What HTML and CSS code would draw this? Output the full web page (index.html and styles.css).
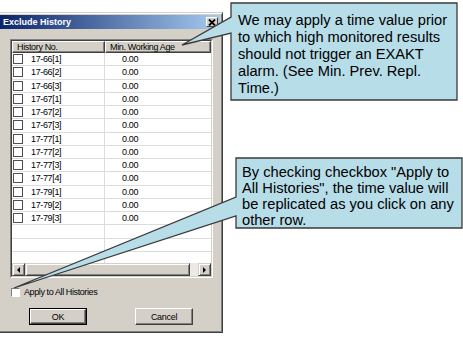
FILE: index.html
```html
<!DOCTYPE html>
<html>
<head>
<meta charset="utf-8">
<link rel="stylesheet" href="styles.css">
</head>
<body>
<div class="dialog">
  <div class="titlebar">
    <span class="title">Exclude History</span>
    <span class="close"><svg width="8" height="7" viewBox="0 0 8 7"><path d="M1 0.5 L7 6.5 M7 0.5 L1 6.5" stroke="#000" stroke-width="1.8"/></svg></span>
  </div>
  <div class="listbox">
    <div class="listinner">
      <div class="header">
        <div class="hcell h1">History No.</div>
        <div class="hcell h2">Min. Working Age</div>
      </div>
      <div class="rows">
        <div class="row"><div class="col1"><span class="cb"></span>17-66[1]</div><div class="col2">0.00</div></div>
        <div class="row"><div class="col1"><span class="cb"></span>17-66[2]</div><div class="col2">0.00</div></div>
        <div class="row"><div class="col1"><span class="cb"></span>17-66[3]</div><div class="col2">0.00</div></div>
        <div class="row"><div class="col1"><span class="cb"></span>17-67[1]</div><div class="col2">0.00</div></div>
        <div class="row"><div class="col1"><span class="cb"></span>17-67[2]</div><div class="col2">0.00</div></div>
        <div class="row"><div class="col1"><span class="cb"></span>17-67[3]</div><div class="col2">0.00</div></div>
        <div class="row"><div class="col1"><span class="cb"></span>17-77[1]</div><div class="col2">0.00</div></div>
        <div class="row"><div class="col1"><span class="cb"></span>17-77[2]</div><div class="col2">0.00</div></div>
        <div class="row"><div class="col1"><span class="cb"></span>17-77[3]</div><div class="col2">0.00</div></div>
        <div class="row"><div class="col1"><span class="cb"></span>17-77[4]</div><div class="col2">0.00</div></div>
        <div class="row"><div class="col1"><span class="cb"></span>17-79[1]</div><div class="col2">0.00</div></div>
        <div class="row"><div class="col1"><span class="cb"></span>17-79[2]</div><div class="col2">0.00</div></div>
        <div class="row"><div class="col1"><span class="cb"></span>17-79[3]</div><div class="col2">0.00</div></div>
        <div class="row"><div class="col1"></div><div class="col2"></div></div>
        <div class="row"><div class="col1"></div><div class="col2"></div></div>
        <div class="row"><div class="col1"></div><div class="col2"></div></div>
      </div>
      <div class="hscroll">
        <div class="sbtn"><span class="arrow left"></span></div>
        <div class="thumb"></div>
        <div class="track"></div>
        <div class="sbtn"><span class="arrow right"></span></div>
      </div>
    </div>
  </div>
  <div class="apply"><span class="applycb"></span><span>Apply to All Histories</span></div>
  <div class="buttons">
    <div class="btn default"><div class="btnface">OK</div></div>
    <div class="btn"><div class="btnface">Cancel</div></div>
  </div>
</div>

<svg class="overlay" width="463" height="337" viewBox="0 0 463 337">
  <path d="M231 3 H457 V100 H231 V33 L182 45 L231 17 Z" fill="#B7DDE8" stroke="#3a3a3a" stroke-width="1.3" stroke-linejoin="miter"/>
  <path d="M236 158 H462 V228 H236 V216 L14 288 L236 197 Z" fill="#B7DDE8" stroke="#3a3a3a" stroke-width="1.3" stroke-linejoin="miter"/>
</svg>

<div class="callout c1">We may apply a time value prior<br>to which high monitored results<br>should not trigger an EXAKT<br>alarm. (See Min. Prev. Repl.<br>Time.)</div>
<div class="callout c2">By checking checkbox "Apply to<br>All Histories", the time value will<br>be replicated as you click on any<br>other row.</div>
</body>
</html>
```

FILE: styles.css
```css
html, body {
  margin: 0;
  padding: 0;
}
body {
  width: 463px;
  height: 337px;
  overflow: hidden;
  position: relative;
  background: #fff;
  font-family: "Liberation Sans", Arial, sans-serif;
}
.dialog {
  margin: 12px 0 0 -3px;
  width: 226px;
  height: 321px;
  box-sizing: border-box;
  background: #D4D0C8;
  border: 1px solid;
  border-color: #D4D0C8 #404040 #404040 #D4D0C8;
  box-shadow: inset 1px 1px #fff, inset -1px -1px #808080;
  padding: 2px;
  display: flex;
  flex-direction: column;
}
.titlebar {
  height: 14px;
  flex: none;
  background: linear-gradient(to right, #0A246A, #A6CAF0);
  display: flex;
  align-items: center;
  justify-content: space-between;
  padding: 0 2px 0 3px;
  color: #fff;
  font-weight: bold;
  font-size: 9px;
}
.close {
  width: 12px;
  height: 10px;
  box-sizing: border-box;
  background: #D4D0C8;
  border: 1px solid;
  border-color: #fff #404040 #404040 #fff;
  display: flex;
  align-items: center;
  justify-content: center;
}
.close svg { display: block; }
.listbox {
  margin: 10px 0 0 10px;
  width: 203px;
  height: 239px;
  box-sizing: border-box;
  border: 1px solid;
  border-color: #808080 #fff #fff #808080;
  flex: none;
}
.listinner {
  height: 100%;
  box-sizing: border-box;
  border: 1px solid;
  border-color: #404040 #D4D0C8 #D4D0C8 #404040;
  background: #fff;
  display: flex;
  flex-direction: column;
  font-size: 9px;
  letter-spacing: -0.35px;
  color: #000;
}
.header {
  display: flex;
  height: 12px;
  flex: none;
}
.hcell {
  box-sizing: border-box;
  background: #D4D0C8;
  border: 1px solid;
  border-color: #fff #404040 #404040 #fff;
  box-shadow: inset -1px -1px #808080;
  padding-left: 4px;
  line-height: 10px;
  white-space: nowrap;
}
.h1 { width: 93px; }
.h2 { flex: 1; }
.rows {
  height: 210px;
  overflow: hidden;
  flex: none;
}
.row {
  display: flex;
  height: 13.25px;
  box-sizing: border-box;
  border-bottom: 1px solid #DCDCDC;
}
.col1 {
  width: 93px;
  box-sizing: border-box;
  border-right: 1px solid #DCDCDC;
  display: flex;
  align-items: center;
  padding-left: 1px;
  white-space: nowrap;
}
.col2 {
  flex: 1;
  display: flex;
  align-items: center;
  padding-left: 17px;
}
.cb {
  width: 10px;
  height: 10px;
  box-sizing: border-box;
  border: 1px solid #505050;
  background: #fff;
  margin-right: 8px;
  flex: none;
}
.hscroll {
  display: flex;
  height: 13px;
  flex: none;
}
.sbtn {
  width: 13px;
  box-sizing: border-box;
  background: #D4D0C8;
  border: 1px solid;
  border-color: #D4D0C8 #404040 #404040 #D4D0C8;
  box-shadow: inset 1px 1px #fff, inset -1px -1px #808080;
  display: flex;
  align-items: center;
  justify-content: center;
}
.thumb {
  width: 165px;
  box-sizing: border-box;
  background: #D4D0C8;
  border: 1px solid;
  border-color: #D4D0C8 #404040 #404040 #D4D0C8;
  box-shadow: inset 1px 1px #fff, inset -1px -1px #808080;
}
.track {
  flex: 1;
  background: #ECEAE6;
}
.arrow {
  width: 0;
  height: 0;
  border-top: 3px solid transparent;
  border-bottom: 3px solid transparent;
}
.arrow.left { border-right: 3px solid #000; }
.arrow.right { border-left: 3px solid #000; }
.apply {
  margin: 9px 0 0 11px;
  display: flex;
  align-items: center;
  height: 10px;
  font-size: 9px;
  letter-spacing: -0.4px;
  color: #000;
}
.applycb {
  width: 9px;
  height: 9px;
  box-sizing: border-box;
  border: 1px solid;
  border-color: #808080 #fff #fff #808080;
  background: #fff;
  margin-right: 4px;
}
.buttons {
  display: flex;
  gap: 48px;
  margin: 11px 0 0 29px;
}
.btn {
  width: 58px;
  height: 17px;
  box-sizing: border-box;
  background: #D4D0C8;
  border: 1px solid;
  border-color: #fff #404040 #404040 #fff;
  font-size: 9px;
  letter-spacing: -0.3px;
  color: #000;
}
.btn.default {
  border-color: #000;
}
.btnface {
  height: 100%;
  box-sizing: border-box;
  display: flex;
  align-items: center;
  justify-content: center;
  box-shadow: inset -1px -1px #808080;
}
.btn.default .btnface {
  border: 1px solid;
  border-color: #fff #404040 #404040 #fff;
}
.overlay {
  position: absolute;
  left: 0;
  top: 0;
}
.callout {
  position: absolute;
  box-sizing: border-box;
  font-family: "Liberation Sans", Arial, sans-serif;
  font-size: 14.67px;
  color: #000;
  white-space: nowrap;
}
.c1 {
  left: 231px;
  top: 3px;
  width: 226px;
  height: 97px;
  padding: 8.5px 0 0 7px;
  line-height: 17px;
}
.c2 {
  left: 236px;
  top: 158px;
  width: 226px;
  height: 70px;
  padding: 6px 0 0 6px;
  line-height: 16px;
}
```
